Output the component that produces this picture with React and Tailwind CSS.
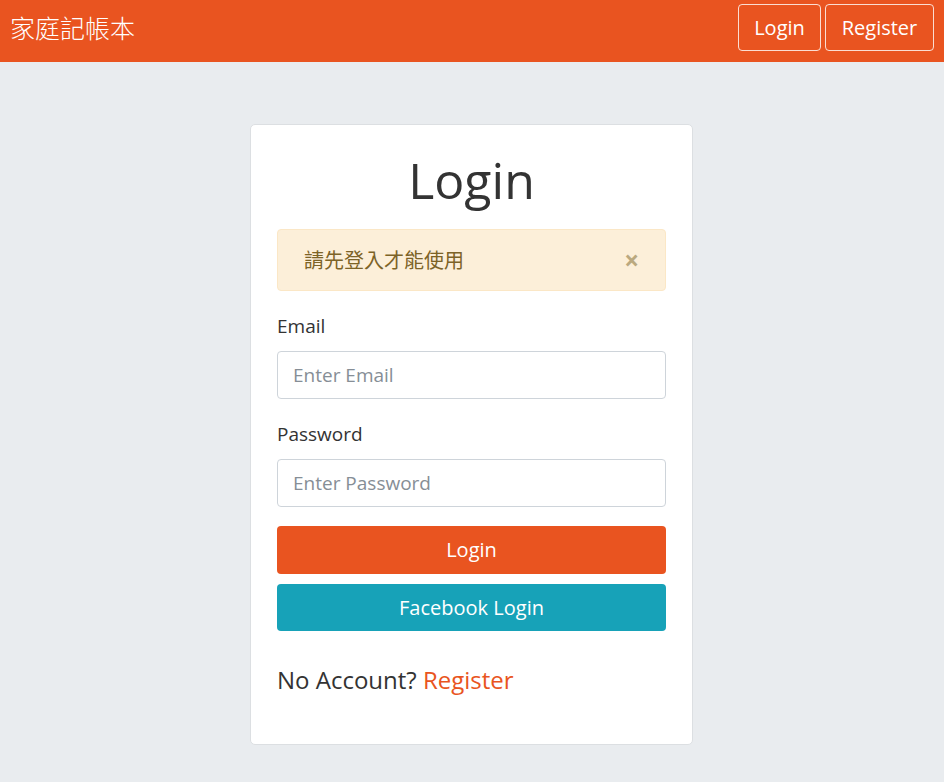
import React from 'react';

const FONT = { fontFamily: '"Open Sans", "Noto Sans CJK TC", sans-serif' };

function Navbar() {
  return (
    <nav className="h-[62px] bg-[#e95420] flex items-start justify-between pl-[10px] pr-[10px]">
      <span className="mt-[11px] text-[25px] leading-[33px] text-white font-light" style={{ fontFamily: '"Noto Sans CJK TC", serif' }}>
        家庭記帳本
      </span>
      <div className="flex gap-[4px] mt-[4px]">
        <button className="h-[47px] w-[83px] border border-white/80 rounded-[4px] text-white text-[20px]">Login</button>
        <button className="h-[47px] w-[109px] border border-white/80 rounded-[4px] text-white text-[20px]">Register</button>
      </div>
    </nav>
  );
}

export default function App() {
  return (
    <div className="min-h-[782px] bg-[#e9ecef] text-[#333]" style={FONT}>
      <Navbar />
      <div className="flex justify-center pt-[62px] pr-[1px]">
        <div className="w-[443px] h-[621px] bg-white border border-[#dcdfe2] rounded-[5px] px-[26px] pt-[25px]">
          <h1 className="text-center text-[50px] leading-[60px] text-[#333]">Login</h1>
          <div className="mt-[19px] h-[62px] rounded-[4px] border border-[#fbe7c6] bg-[#fcefd9] flex items-center justify-between pl-[26px] pr-[26px]">
            <span className="text-[20px] text-[#7c6327]" style={{ fontFamily: '"Noto Sans CJK TC", sans-serif' }}>請先登入才能使用</span>
            <span className="text-[26px] font-bold leading-none text-[#bba97f]">×</span>
          </div>
          <label className="block mt-[20px] text-[19px] leading-[30px]">Email</label>
          <input
            className="mt-[10px] w-full h-[48px] border border-[#ced4da] rounded-[4px] px-[15px] text-[19px] placeholder:text-[#868e96] outline-none"
            placeholder="Enter Email"
          />
          <label className="block mt-[20px] text-[19px] leading-[30px]">Password</label>
          <input
            type="password"
            className="mt-[10px] w-full h-[48px] border border-[#ced4da] rounded-[4px] px-[15px] text-[19px] placeholder:text-[#868e96] outline-none"
            placeholder="Enter Password"
          />
          <button className="mt-[19px] w-full h-[48px] rounded-[4px] bg-[#e95420] text-white text-[20px]">Login</button>
          <button className="mt-[10px] w-full h-[47px] rounded-[4px] bg-[#17a2b8] text-white text-[20px]">Facebook Login</button>
          <p className="mt-[31px] text-[24px] leading-[36px]">
            No Account? <a className="text-[#e95420]">Register</a>
          </p>
        </div>
      </div>
    </div>
  );
}
